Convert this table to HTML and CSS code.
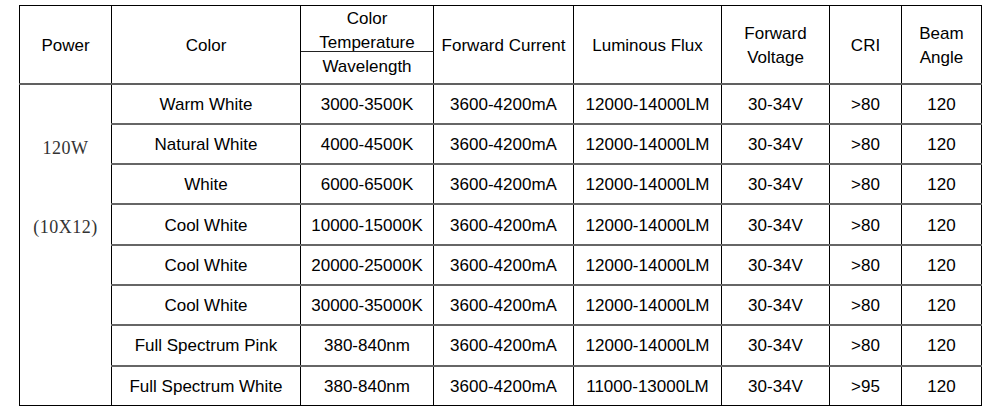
FILE: index.html
```html
<!DOCTYPE html>
<html>
<head>
<meta charset="utf-8">
<link rel="stylesheet" href="styles.css">
</head>
<body>
<table class="spec">
  <colgroup>
    <col class="c-power"><col class="c-color"><col class="c-temp"><col class="c-cur">
    <col class="c-flux"><col class="c-volt"><col class="c-cri"><col class="c-beam">
  </colgroup>
  <thead>
    <tr class="h-top">
      <th rowspan="2">Power</th>
      <th rowspan="2">Color</th>
      <th class="temp"><div class="temp-box">Color<br>Temperature</div></th>
      <th rowspan="2">Forward Current</th>
      <th rowspan="2">Luminous Flux</th>
      <th rowspan="2">Forward<br>Voltage</th>
      <th rowspan="2">CRI</th>
      <th rowspan="2">Beam<br>Angle</th>
    </tr>
    <tr class="h-bot">
      <th class="wave">Wavelength</th>
    </tr>
  </thead>
  <tbody>
    <tr>
      <td rowspan="8" class="power"><div class="power-text"><span>120W</span><span>(10X12)</span></div></td>
      <td>Warm White</td><td>3000-3500K</td><td>3600-4200mA</td><td>12000-14000LM</td><td>30-34V</td><td>&gt;80</td><td>120</td>
    </tr>
    <tr><td>Natural White</td><td>4000-4500K</td><td>3600-4200mA</td><td>12000-14000LM</td><td>30-34V</td><td>&gt;80</td><td>120</td></tr>
    <tr><td>White</td><td>6000-6500K</td><td>3600-4200mA</td><td>12000-14000LM</td><td>30-34V</td><td>&gt;80</td><td>120</td></tr>
    <tr><td>Cool White</td><td>10000-15000K</td><td>3600-4200mA</td><td>12000-14000LM</td><td>30-34V</td><td>&gt;80</td><td>120</td></tr>
    <tr><td>Cool White</td><td>20000-25000K</td><td>3600-4200mA</td><td>12000-14000LM</td><td>30-34V</td><td>&gt;80</td><td>120</td></tr>
    <tr><td>Cool White</td><td>30000-35000K</td><td>3600-4200mA</td><td>12000-14000LM</td><td>30-34V</td><td>&gt;80</td><td>120</td></tr>
    <tr><td>Full Spectrum Pink</td><td>380-840nm</td><td>3600-4200mA</td><td>12000-14000LM</td><td>30-34V</td><td>&gt;80</td><td>120</td></tr>
    <tr class="last"><td>Full Spectrum White</td><td>380-840nm</td><td>3600-4200mA</td><td>11000-13000LM</td><td>30-34V</td><td>&gt;95</td><td>120</td></tr>
  </tbody>
</table>
</body>
</html>
```
FILE: styles.css
```css
html, body {
  margin: 0;
  padding: 0;
  background: #fff;
}
body {
  padding: 5px 0 0 19px;
  font-family: "Liberation Sans", Arial, sans-serif;
  color: #000;
}
.spec {
  border-collapse: collapse;
  table-layout: fixed;
  width: 962px;
  font-size: 17px;
  border: 1px solid #000;
}
.c-power { width: 92px; }
.c-color { width: 189px; }
.c-temp { width: 133px; }
.c-cur { width: 140px; }
.c-flux { width: 148px; }
.c-volt { width: 108px; }
.c-cri { width: 72px; }
.c-beam { width: 80px; }

.spec th, .spec td {
  border-left: 1px solid #000;
  border-right: 1px solid #000;
  padding: 0;
  text-align: center;
  vertical-align: middle;
  font-weight: normal;
  line-height: 24px;
  white-space: nowrap;
}
.spec thead th[rowspan] {
  padding-top: 3px;
}
.h-top { height: 45px; }
.h-bot { height: 32px; }
.spec th.temp {
  vertical-align: top;
  border-bottom: 1px solid #222;
}
.temp-box {
  height: 45px;
  box-sizing: border-box;
  padding-top: 1px;
  line-height: 24px;
  overflow: visible;
}
.spec th.wave {
  vertical-align: middle;
}
.spec thead tr.h-bot th,
.spec thead tr.h-top th[rowspan] {
  border-bottom: 2px solid #606060;
}
.spec tbody tr {
  height: 40.3px;
}
.spec tbody td {
  border-bottom: 2px solid #666;
  padding-top: 2px;
}
.spec tbody tr.last td {
  border-bottom: 1px solid #000;
}
.spec td.power {
  vertical-align: top;
  padding-top: 0;
  border-bottom: 1px solid #000;
}
.power-text {
  display: flex;
  flex-direction: column;
  align-items: center;
  gap: 39px;
  padding-top: 43px;
  font-family: "Liberation Serif", "Times New Roman", serif;
  font-size: 18px;
  line-height: 40px;
  color: #333;
  letter-spacing: 0.5px;
}
```
